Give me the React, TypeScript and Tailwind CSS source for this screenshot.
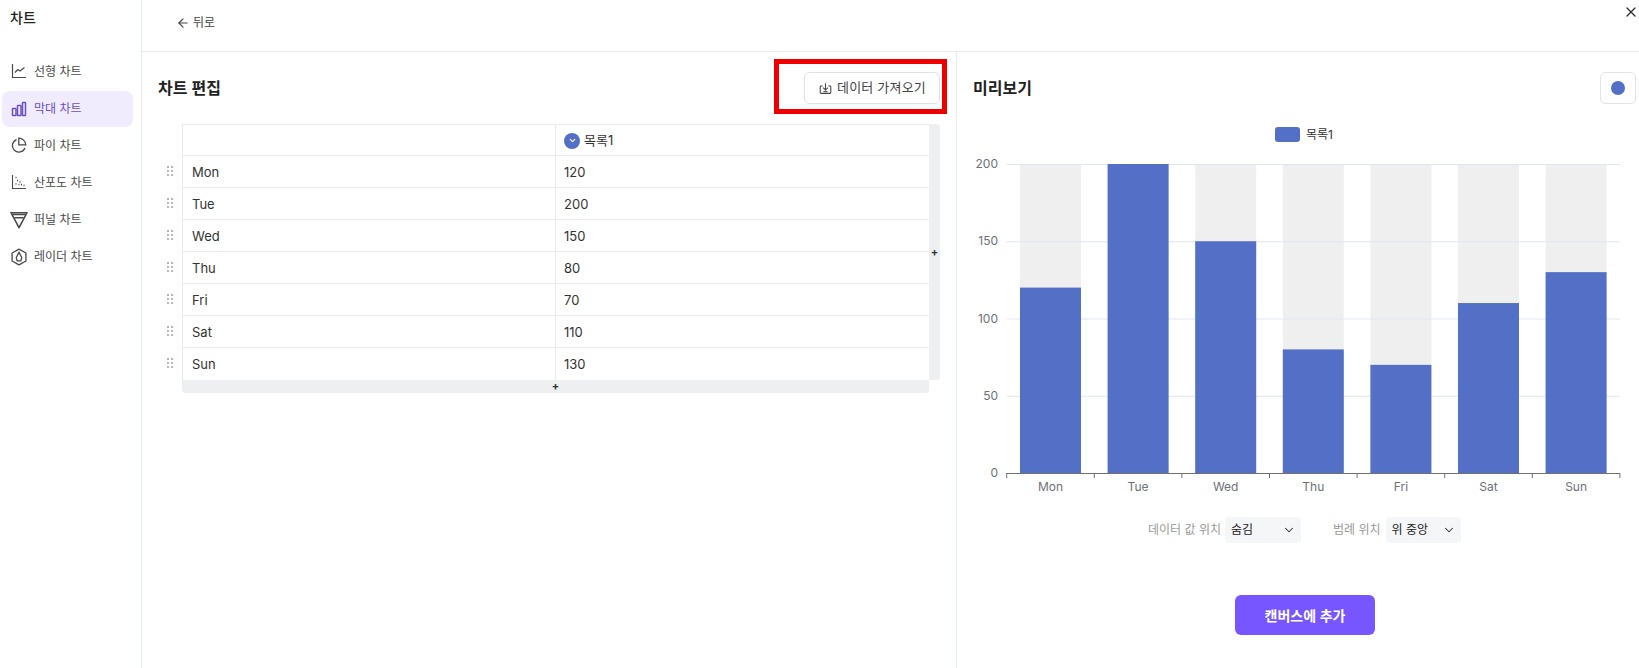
import { ArrowLeft, ChevronDown, X } from 'lucide-react'

const font = { fontFamily: 'Inter, "Noto Sans CJK KR", sans-serif' }

const rows = [
  { label: 'Mon', value: 120 },
  { label: 'Tue', value: 200 },
  { label: 'Wed', value: 150 },
  { label: 'Thu', value: 80 },
  { label: 'Fri', value: 70 },
  { label: 'Sat', value: 110 },
  { label: 'Sun', value: 130 },
]

function LineIcon() {
  return (
    <svg viewBox="0 0 16 16" className="h-4 w-4 -translate-y-[1px]" fill="none" stroke="currentColor" strokeWidth="1.200">
      <path d="M1.500 1v13.500H15" />
      <path d="M4 9.500l2.800-3 2.200 1.500 4.500-3.500" />
    </svg>
  )
}

function BarIcon() {
  return (
    <svg viewBox="0 0 16 16" className="h-4 w-4" fill="none" stroke="currentColor" strokeWidth="1.500">
      <rect x="1.500" y="7.500" width="3.500" height="7" rx="0.500" />
      <rect x="6.500" y="4.500" width="3.500" height="10" rx="0.500" />
      <rect x="11.500" y="1.500" width="3" height="13" rx="0.500" />
    </svg>
  )
}

function PieIcon() {
  return (
    <svg viewBox="0 0 16 16" className="h-4 w-4 -translate-y-[1px]" fill="none" stroke="currentColor" strokeWidth="1.300">
      <path d="M5.500 2.600a6.500 6.500 0 1 0 8.500 8.400" />
      <path d="M7.800 1.200v6.600h7a7 7 0 0 0-7-6.600z" />
    </svg>
  )
}

function ScatterIcon() {
  return (
    <svg viewBox="0 0 16 16" className="h-4 w-4 -translate-y-[1px]" fill="none" stroke="currentColor" strokeWidth="1.100">
      <path d="M1.500 1v13.500H15" />
      <path d="M4.500 3.500h1M6 6.500h1M4.500 10h1M8.500 8h1M10 10.500h1M12.500 11.500h1M7.500 10.500h1" strokeWidth="1.300" />
    </svg>
  )
}

function FunnelIcon() {
  return (
    <svg viewBox="0 0 16 16" className="h-4 w-4 scale-110" fill="none" stroke="currentColor" strokeWidth="1.400">
      <path d="M.8 1.500h14.400L8 15z" />
      <path d="M2 3h12" />
      <path d="M3.800 6h8.400" />
    </svg>
  )
}

function RadarIcon() {
  return (
    <svg viewBox="0 0 16 16" className="h-4 w-4 scale-110" fill="none" stroke="currentColor" strokeWidth="1.200">
      <path d="M8 .8l6.300 3.600v7.200L8 15.200l-6.300-3.600V4.400z" />
      <path d="M8 3.800l2.500 4.700-.8 3H6.300l-.8-3z" />
    </svg>
  )
}

const menu = [
  { label: '선형 차트', icon: <LineIcon /> },
  { label: '막대 차트', icon: <BarIcon />, active: true },
  { label: '파이 차트', icon: <PieIcon /> },
  { label: '산포도 차트', icon: <ScatterIcon /> },
  { label: '퍼널 차트', icon: <FunnelIcon /> },
  { label: '레이더 차트', icon: <RadarIcon /> },
]

function DragHandle() {
  return (
    <div className="grid grid-cols-2 gap-x-[2px] gap-y-[2px]">
      {[0, 1, 2, 3, 4, 5].map((i) => (
        <span key={i} className="h-[2px] w-[2px] bg-[#b8b8b8]" />
      ))}
    </div>
  )
}

function Chart() {
  const left = 1006.7
  const step = 87.6
  const top = 164
  const bottom = 473
  const scale = (bottom - top) / 200
  return (
    <svg viewBox="958 114 681 396" className="ml-px block h-[396px] w-[681px]">
      <rect x="1275" y="127" width="25" height="15" rx="3" fill="#5470c6" />
      <text x="1306" y="139" fontSize="12" fill="#333">목록1</text>
      {rows.map((r, i) => (
        <rect key={r.label} x={left + step * i + 13.3} y={top} width="61" height={bottom - top} fill="#efefef" />
      ))}
      {[0, 50, 100, 150, 200].map((v) => (
        <g key={v}>
          <line x1={left} x2="1620" y1={bottom - v * scale + 0.5} y2={bottom - v * scale + 0.5} stroke={v === 0 ? '#6e7079' : '#e0e6f1'} />
          <text x="998" y={bottom - v * scale + 4} fontSize="12" textAnchor="end" fill="#6e7079">{v}</text>
        </g>
      ))}
      {rows.map((r, i) => {
        const x = left + step * i + 13.3
        return (
          <g key={r.label}>
            <rect x={x} y={bottom - r.value * scale} width="61" height={r.value * scale} fill="#5470c6" />
            <text x={x + 30.500} y="491" fontSize="12" textAnchor="middle" fill="#6e7079">{r.label}</text>
          </g>
        )
      })}
      {[0, 1, 2, 3, 4, 5, 6, 7].map((i) => (
        <line key={i} x1={left + step * i} x2={left + step * i} y1="473" y2="478" stroke="#6e7079" />
      ))}
    </svg>
  )
}

function SelectBox({ value, width }: { value: string; width: string }) {
  return (
    <div className={`flex h-[26px] items-center justify-between rounded bg-[#f5f6f8] pl-[6px] pr-[5px] text-[12px] text-[#222] ${width}`}>
      <span>{value}</span>
      <ChevronDown className="h-[14px] w-[14px] text-[#333]" strokeWidth={1.800} />
    </div>
  )
}

export default function App() {
  return (
    <div style={font} className="relative flex h-[668px] w-[1639px] overflow-hidden bg-white text-[#333]">
      <aside className="w-[142px] shrink-0 border-r border-[#e9eaec] px-[2px]">
        <div className="pl-2 pt-[8px] text-[14px] font-medium leading-5 text-[#222]">차트</div>
        <nav className="mt-[26px] flex w-[131px] flex-col gap-px">
          {menu.map((m) => (
            <div
              key={m.label}
              className={`flex h-9 items-center gap-[7px] rounded-lg pl-[9px] text-[12px] ${
                m.active ? 'bg-[#f0ebfd] text-[#6a4fc8]' : 'text-[#4a4a4a]'
              }`}
            >
              {m.icon}
              <span>{m.label}</span>
            </div>
          ))}
        </nav>
      </aside>

      <div className="flex min-w-0 flex-1 flex-col">
        <header className="flex h-[52px] shrink-0 items-center gap-[3px] border-b border-[#e9eaec] pb-[5px] pl-[34px] text-[12px] text-[#444]">
          <ArrowLeft className="h-[14px] w-[14px]" />
          <span>뒤로</span>
        </header>

        <div className="flex flex-1">
          <section className="w-[815px] shrink-0 border-r border-[#e9eaec]">
            <div className="flex h-[72px] items-start justify-between pl-4 pr-[16px] pt-5">
              <h2 className="text-[16px] font-semibold leading-8 text-[#222]">차트 편집</h2>
              <div className="relative">
                <button className="flex h-8 w-[136px] items-center gap-[5px] rounded-md border border-[#dfe1e6] pl-[14px] text-[13px] tracking-[0.2px] text-[#444]">
                  <svg viewBox="0 0 16 16" className="h-[13px] w-[13px]" fill="none" stroke="currentColor" strokeWidth="1.300">
                    <path d="M4.500 5H2.500a1 1 0 0 0-1 1v7a1 1 0 0 0 1 1h11a1 1 0 0 0 1-1V6a1 1 0 0 0-1-1h-2" />
                    <path d="M8 1.500v8M5 7l3 3 3-3" />
                    <path d="M5.500 11.800h5" />
                  </svg>
                  데이터 가져오기
                </button>
                <div className="absolute -bottom-[10px] -left-[30px] -right-[7px] -top-[13px] border-[5px] border-[#ef0000]" />
              </div>
            </div>

            <div className="ml-[25px] flex">
              <div className="flex w-[15px] flex-col pt-[31px]">
                {rows.map((r) => (
                  <div key={r.label} className="flex h-8 w-[8px] items-center">
                    <DragHandle />
                  </div>
                ))}
              </div>
              <div className="w-[758px]">
                <div className="flex">
                  <div className="w-[747px] border-l border-t border-[#e9eaec] text-[13px] text-[#333]">
                    <div className="flex h-[31px] border-b border-[#e9eaec]">
                      <div className="w-[373px] border-r border-[#e9eaec]" />
                      <div className="flex items-center gap-1 pl-2 pt-px">
                        <span className="flex h-4 w-4 items-center justify-center rounded-full bg-[#5470c6] text-white">
                          <ChevronDown className="h-[9px] w-[9px]" strokeWidth={3} />
                        </span>
                        <span>목록1</span>
                      </div>
                    </div>
                    {rows.map((r, i) => (
                      <div key={r.label} className={`flex h-8 ${i < rows.length - 1 ? 'border-b border-[#e9eaec]' : ''}`}>
                        <div className="flex w-[373px] items-center border-r border-[#e9eaec] pl-[9px] pt-[2px]">{r.label}</div>
                        <div className="flex items-center pl-2 pt-[2px]">{r.value}</div>
                      </div>
                    ))}
                  </div>
                  <div className="flex w-[11px] items-center justify-center rounded-r bg-[#eeeff0] text-[11px] font-bold leading-none text-[#333]">
                    +
                  </div>
                </div>
                <div className="flex h-[13px] w-[747px] items-center justify-center rounded-b bg-[#eeeff0] text-[11px] font-bold leading-none text-[#333]">
                  +
                </div>
              </div>
            </div>
          </section>

          <section className="min-w-0 flex-1">
            <div className="flex h-[62px] items-start justify-between pl-[16px] pr-[3px] pt-5">
              <h2 className="text-[16px] font-semibold leading-8 text-[#222]">미리보기</h2>
              <div className="flex h-8 w-9 items-center justify-center rounded-md border border-[#e2e3e6]">
                <span className="h-[14px] w-[14px] rounded-full bg-[#5470c6]" />
              </div>
            </div>
            <Chart />
            <div className="mt-[7px] flex items-center text-[12px] text-[#999]">
              <span className="ml-[191px] mr-1">데이터 값 위치</span>
              <SelectBox value="숨김" width="w-[76px]" />
              <span className="ml-[32px] mr-[5px]">범례 위치</span>
              <SelectBox value="위 중앙" width="w-[75px]" />
            </div>
            <div className="mt-[52px] flex pl-[278px]">
              <button className="h-10 w-[140px] rounded-md bg-[#7856ff] text-[14px] font-semibold text-white">캔버스에 추가</button>
            </div>
          </section>
        </div>
      </div>

      <X className="absolute right-0 top-[4px] h-4 w-4 text-[#333]" />
    </div>
  )
}
